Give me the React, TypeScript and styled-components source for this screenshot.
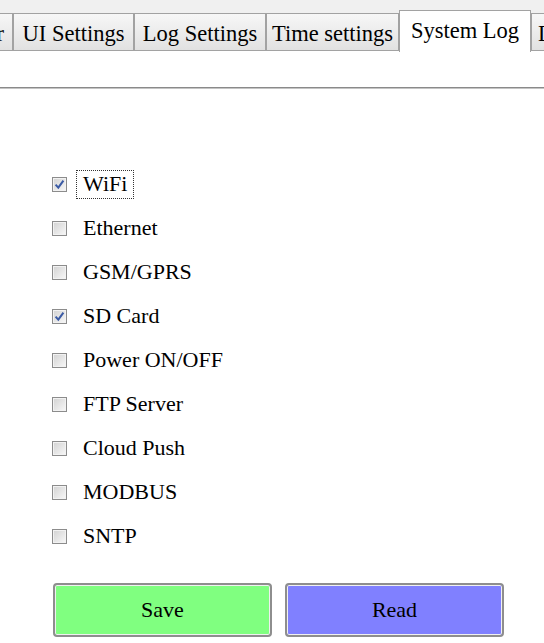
import styled, { createGlobalStyle } from "styled-components";

const GlobalStyle = createGlobalStyle`
  html, body {
    margin: 0;
    padding: 0;
    background: #ffffff;
    font-family: "Liberation Serif", "Times New Roman", serif;
    color: #000;
    overflow: hidden;
  }
`;

const Page = styled.div`
  width: 544px;
  height: 643px;
  overflow: hidden;
  display: flex;
  flex-direction: column;
`;

const TabBar = styled.div`
  height: 51px;
  background: #f0f0f0;
  display: flex;
  align-items: flex-end;
  margin-left: -128px;
  flex-shrink: 0;
`;

const Tab = styled.div<{ $active?: boolean; $width: number }>`
  box-sizing: border-box;
  width: ${(p) => p.$width}px;
  flex-shrink: 0;
  height: ${(p) => (p.$active ? 42 : 38)}px;
  margin-bottom: ${(p) => (p.$active ? -1 : 0)}px;
  border: 1px solid #a2a2a2;
  border-bottom: ${(p) => (p.$active ? "none" : "1px solid #a2a2a2")};
  background: ${(p) =>
    p.$active ? "#ffffff" : "linear-gradient(#f7f7f7, #e1e1e1)"};
  font-family: "Liberation Serif", "Times New Roman", serif;
  font-size: 22.5px;
  white-space: nowrap;
  overflow: hidden;
  display: flex;
  align-items: center;
  justify-content: ${(p) => (p.$width > 135 ? "flex-end" : "center")};
  padding: ${(p) => (p.$active ? "0 0 2px" : "3px 0 0")};
  padding-right: ${(p) => (p.$width > 135 ? 8 : 0)}px;
  position: relative;
  z-index: ${(p) => (p.$active ? 1 : 0)};
`;

const Rule = styled.div`
  margin-top: 36px;
  height: 2px;
  background: linear-gradient(#8a8a8a 50%, #c4c4c4 50%);
  flex-shrink: 0;
`;

const List = styled.div`
  padding: 73px 0 0 52px;
  display: flex;
  flex-direction: column;
`;

const Row = styled.label`
  height: 44px;
  display: flex;
  align-items: center;
  font-family: "Liberation Serif", "Times New Roman", serif;
  font-size: 22px;
`;

const Box = styled.span`
  box-sizing: border-box;
  width: 15px;
  height: 15px;
  border: 1px solid #8c8c8c;
  background: linear-gradient(135deg, #d2d2d2, #f8f8f8);
  box-shadow: inset 0 0 0 1px #f2f2f2;
  display: flex;
  align-items: center;
  justify-content: center;
  margin-right: 9px;
  flex-shrink: 0;
`;

const Label = styled.span<{ $focused?: boolean }>`
  padding: 2px 6px 3px;
  border: 1px dotted ${(p) => (p.$focused ? "#333" : "transparent")};
  line-height: 22px;
`;

const Buttons = styled.div`
  display: flex;
  gap: 13px;
  padding: 25px 0 0 53px;
`;

const Button = styled.button<{ $bg: string }>`
  box-sizing: border-box;
  width: 219px;
  height: 54px;
  background: ${(p) => p.$bg};
  border: 2px solid #8e8e8e;
  border-radius: 4px;
  box-shadow: inset 0 0 0 1px #f0f0f0;
  font-family: "Liberation Serif", "Times New Roman", serif;
  font-size: 22px;
  color: #000;
  padding: 0;
`;

const tabs = [
  { id: "Modbus Master", width: 141 },
  { id: "UI Settings", width: 121 },
  { id: "Log Settings", width: 132 },
  { id: "Time settings", width: 133 },
  { id: "System Log", width: 132, active: true },
  { id: "Diagnostics", width: 120 },
];

const items = [
  { id: "WiFi", checked: true, focused: true },
  { id: "Ethernet" },
  { id: "GSM/GPRS" },
  { id: "SD Card", checked: true },
  { id: "Power ON/OFF" },
  { id: "FTP Server" },
  { id: "Cloud Push" },
  { id: "MODBUS" },
  { id: "SNTP" },
];

function Check() {
  return (
    <svg width="11" height="11" viewBox="0 0 11 11">
      <path
        d="M1.6 5.6 L4.3 8.6 L9.4 1.6"
        fill="none"
        stroke="#3b5ba5"
        strokeWidth="2"
      />
    </svg>
  );
}

export default function App() {
  return (
    <>
      <GlobalStyle />
      <Page>
        <TabBar>
          {tabs.map((t) => (
            <Tab key={t.id} $active={t.active} $width={t.width}>
              {t.id}
            </Tab>
          ))}
        </TabBar>
        <Rule />
        <List>
          {items.map((item) => (
            <Row key={item.id}>
              <Box>{item.checked && <Check />}</Box>
              <Label $focused={item.focused}>{item.id}</Label>
            </Row>
          ))}
        </List>
        <Buttons>
          <Button $bg="#80ff80">Save</Button>
          <Button $bg="#8080ff">Read</Button>
        </Buttons>
      </Page>
    </>
  );
}
